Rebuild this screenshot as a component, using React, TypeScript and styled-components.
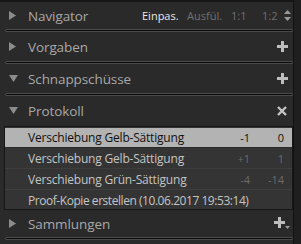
import React from "react";
import styled, { createGlobalStyle } from "styled-components";

const Global = createGlobalStyle`
  html, body { margin: 0; padding: 0; background: #1f1f1f; }
  body { width: 301px; height: 244px; overflow: hidden; }
`;

const Frame = styled.div`
  width: 301px;
  height: 244px;
  display: flex;
  background: #1f1f1f;
`;

const Panel = styled.div`
  width: 294px;
  height: 244px;
  background: #2a2a2a;
  border-top: 2px solid #161616;
  border-right: 1px solid #121212;
  box-sizing: border-box;
  display: flex;
  flex-direction: column;
  font-family: "Open Sans", "Noto Sans", sans-serif;
`;

const Header = styled.div<{ $h?: number; $pr?: number }>`
  height: ${(p) => p.$h ?? 29}px;
  display: flex;
  align-items: center;
  padding: 0 ${(p) => p.$pr ?? 4}px 0 9px;
  flex-shrink: 0;
`;

const Tri = styled.span`
  width: 13px;
  height: 14px;
  display: flex;
  align-items: center;
  justify-content: flex-start;
  margin-right: 6px;
`;

const Title = styled.span`
  font-size: 13.5px;
  color: #a8a8a8;
  flex: 1;
  letter-spacing: -0.1px;
`;

const Groove = styled.div`
  height: 3px;
  margin: 0 0 0 5px;
  box-sizing: border-box;
  background: #0c0c0c;
  border: 1px solid #4a4a4a;
  border-radius: 1px;
  flex-shrink: 0;
`;

const Zoom = styled.span<{ $on?: boolean; $w: number }>`
  font-size: 11px;
  width: ${(p) => p.$w}px;
  white-space: nowrap;
  color: ${(p) => (p.$on ? "#e8e8e8" : "#707070")};
`;

const IconBox = styled.span<{ $w?: number }>`
  display: flex;
  align-items: center;
  justify-content: center;
  width: ${(p) => p.$w ?? 14}px;
`;

const List = styled.div`
  margin: 1px 0 0 4px;
  border: 1px solid #161616;
  background: #343434;
  display: flex;
  flex-direction: column;
  flex-shrink: 0;
`;

const Row = styled.div<{ $sel?: boolean; $h?: number }>`
  height: ${(p) => p.$h ?? 21}px;
  box-sizing: border-box;
  display: flex;
  align-items: center;
  padding: 0 0 0 23px;
  font-size: 12px;
  background: ${(p) => (p.$sel ? "#b3b3b3" : "transparent")};
  background-clip: padding-box;
  color: ${(p) => (p.$sel ? "#111111" : "#c4c4c4")};
  border-top: 1px solid transparent;
  border-bottom: 1px solid ${(p) => (p.$sel ? "#2a2a2a" : "#3e3e3e")};
  &:last-child { border-bottom: none; }
`;

const Label = styled.span<{ $tight?: boolean }>`
  flex: 1;
  white-space: nowrap;
  letter-spacing: ${(p) => (p.$tight ? "-0.45px" : "-0.2px")};
`;

const Num = styled.span<{ $w: number; $dim?: boolean }>`
  width: ${(p) => p.$w}px;
  text-align: right;
  font-size: 11px;
  color: ${(p) => (p.$dim ? "#6a6a6a" : "inherit")};
`;

const TriRight = () => (
  <svg width="7" height="9" viewBox="0 0 7 9">
    <polygon points="0,0 7,4.5 0,9" fill="#8c8c8c" />
  </svg>
);

const TriDown = () => (
  <svg width="9" height="7" viewBox="0 0 9 7">
    <polygon points="0,0 9,0 4.5,7" fill="#8c8c8c" />
  </svg>
);

const Plus = () => (
  <svg width="11" height="11" viewBox="0 0 11 11">
    <rect x="4" y="0" width="3" height="11" fill="#bdbdbd" />
    <rect x="0" y="4" width="11" height="3" fill="#bdbdbd" />
  </svg>
);

const PlusDrop = () => (
  <svg width="16" height="13" viewBox="0 0 16 13">
    <rect x="4" y="0" width="3" height="11" fill="#bdbdbd" />
    <rect x="0" y="4" width="11" height="3" fill="#bdbdbd" />
    <polygon points="11,9 16,9 13.5,12" fill="#9a9a9a" />
  </svg>
);

const Close = () => (
  <svg width="10" height="10" viewBox="0 0 10 10">
    <path d="M1 1 L9 9 M9 1 L1 9" stroke="#c4c4c4" strokeWidth="2.4" />
  </svg>
);

const UpDown = () => (
  <svg width="7" height="11" viewBox="0 0 7 11">
    <polygon points="3.5,0 7,4 0,4" fill="#9a9a9a" />
    <polygon points="0,7 7,7 3.5,11" fill="#9a9a9a" />
  </svg>
);

export default function App() {
  return (
    <Frame>
      <Global />
      <Panel>
        <Header $h={27} $pr={2}>
          <Tri><TriRight /></Tri>
          <Title>Navigator</Title>
          <Zoom $on $w={45}>Einpas.</Zoom>
          <Zoom $w={44}>Ausfül.</Zoom>
          <Zoom $w={31}>1:1</Zoom>
          <Zoom $w={22}>1:2</Zoom>
          <IconBox $w={7}><UpDown /></IconBox>
        </Header>
        <Groove />
        <Header>
          <Tri><TriRight /></Tri>
          <Title>Vorgaben</Title>
          <IconBox><Plus /></IconBox>
        </Header>
        <Groove />
        <Header>
          <Tri><TriDown /></Tri>
          <Title>Schnappschüsse</Title>
          <IconBox><Plus /></IconBox>
        </Header>
        <Groove />
        <Header>
          <Tri><TriDown /></Tri>
          <Title>Protokoll</Title>
          <IconBox><Close /></IconBox>
        </Header>
        <List>
          <Row $sel>
            <Label>Verschiebung Gelb-Sättigung</Label>
            <Num $w={20}>-1</Num>
            <Num $w={34}>0</Num>
            <Num $w={8}></Num>
          </Row>
          <Row>
            <Label>Verschiebung Gelb-Sättigung</Label>
            <Num $w={20} $dim>+1</Num>
            <Num $w={34} $dim>1</Num>
            <Num $w={8}></Num>
          </Row>
          <Row>
            <Label>Verschiebung Grün-Sättigung</Label>
            <Num $w={20} $dim>-4</Num>
            <Num $w={34} $dim>-14</Num>
            <Num $w={8}></Num>
          </Row>
          <Row $h={19}>
            <Label $tight>Proof-Kopie erstellen (10.06.2017 19:53:14)</Label>
          </Row>
        </List>
        <Header $h={27} $pr={3}>
          <Tri><TriRight /></Tri>
          <Title>Sammlungen</Title>
          <IconBox $w={16}><PlusDrop /></IconBox>
        </Header>
        <Groove />
      </Panel>
    </Frame>
  );
}
